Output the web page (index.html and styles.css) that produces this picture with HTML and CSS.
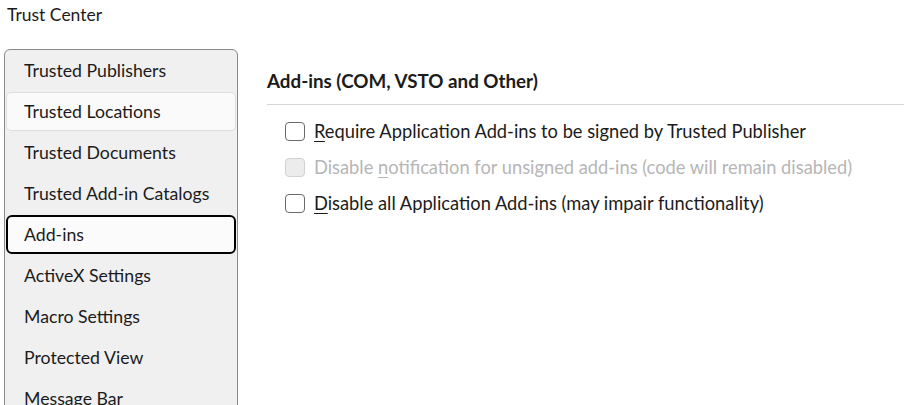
FILE: index.html
```html
<!DOCTYPE html>
<html>
<head>
<meta charset="utf-8">
<link rel="stylesheet" href="styles.css">
</head>
<body>
<div class="title">Trust Center</div>
<div class="main">
  <nav class="sidebar">
    <div class="item">Trusted Publishers</div>
    <div class="item hover">Trusted Locations</div>
    <div class="item">Trusted Documents</div>
    <div class="item">Trusted Add-in Catalogs</div>
    <div class="item selected">Add-ins</div>
    <div class="item">ActiveX Settings</div>
    <div class="item">Macro Settings</div>
    <div class="item">Protected View</div>
    <div class="item">Message Bar</div>
  </nav>
  <section class="content">
    <h2 class="heading">Add-ins (COM, VSTO and Other)</h2>
    <div class="rows">
      <label class="row"><span class="box"></span><span><u>R</u>equire Application Add-ins to be signed by Trusted Publisher</span></label>
      <label class="row disabled"><span class="box"></span><span>Disable <u>n</u>otification for unsigned add-ins (code will remain disabled)</span></label>
      <label class="row"><span class="box"></span><span><u>D</u>isable all Application Add-ins (may impair functionality)</span></label>
    </div>
  </section>
</div>
</body>
</html>
```

FILE: styles.css
```css
html, body {
  margin: 0;
  padding: 0;
  background: #ffffff;
  overflow: hidden;
  height: 405px;
}
body {
  font-family: "Lato", "Liberation Sans", sans-serif;
  color: #1b1b1b;
  font-size: 17.7px;
}
.title {
  font-size: 17.5px;
  line-height: 22px;
  padding: 4px 0 0 7px;
  height: 49px;
  box-sizing: border-box;
}
.main {
  display: flex;
  align-items: flex-start;
}
.sidebar {
  margin-left: 4px;
  width: 234px;
  box-sizing: border-box;
  border: 1px solid #8a8a8a;
  border-radius: 6px;
  background: #f0f0f0;
  height: 420px;
  flex: none;
  display: flex;
  flex-direction: column;
  gap: 2px;
  padding: 1px;
}
.item {
  height: 39px;
  flex: none;
  box-sizing: border-box;
  padding-left: 17px;
  display: flex;
  align-items: center;
  border-radius: 5px;
  border: 1px solid transparent;
}
.item.hover {
  background: #fafafa;
  border-color: #dedede;
}
.item.selected {
  background: #fbfbfb;
  border: 2px solid #000000;
  border-radius: 6px;
  padding-left: 16px;
}
.content {
  flex: 1;
  margin-left: 29px;
  margin-top: 20px;
}
.heading {
  margin: 0;
  font-size: 18.8px;
  font-weight: bold;
  line-height: 24px;
  padding-top: 0;
  padding-bottom: 11px;
  border-bottom: 1px solid #d6d6d6;
}
.rows {
  padding-top: 8px;
  padding-left: 18px;
}
.row {
  display: flex;
  align-items: center;
  gap: 9px;
  height: 36px;
  font-size: 18.3px;
}
.box {
  width: 20px;
  height: 19px;
  box-sizing: border-box;
  border: 1.5px solid #6a6a6a;
  border-radius: 4px;
  background: #fff;
  flex: none;
}
.row.disabled {
  color: #b6b6b6;
}
.row.disabled .box {
  border-color: #d2d2d2;
  background: #ececec;
}
u {
  text-underline-offset: 3px;
  text-decoration-thickness: 1px;
}
```
